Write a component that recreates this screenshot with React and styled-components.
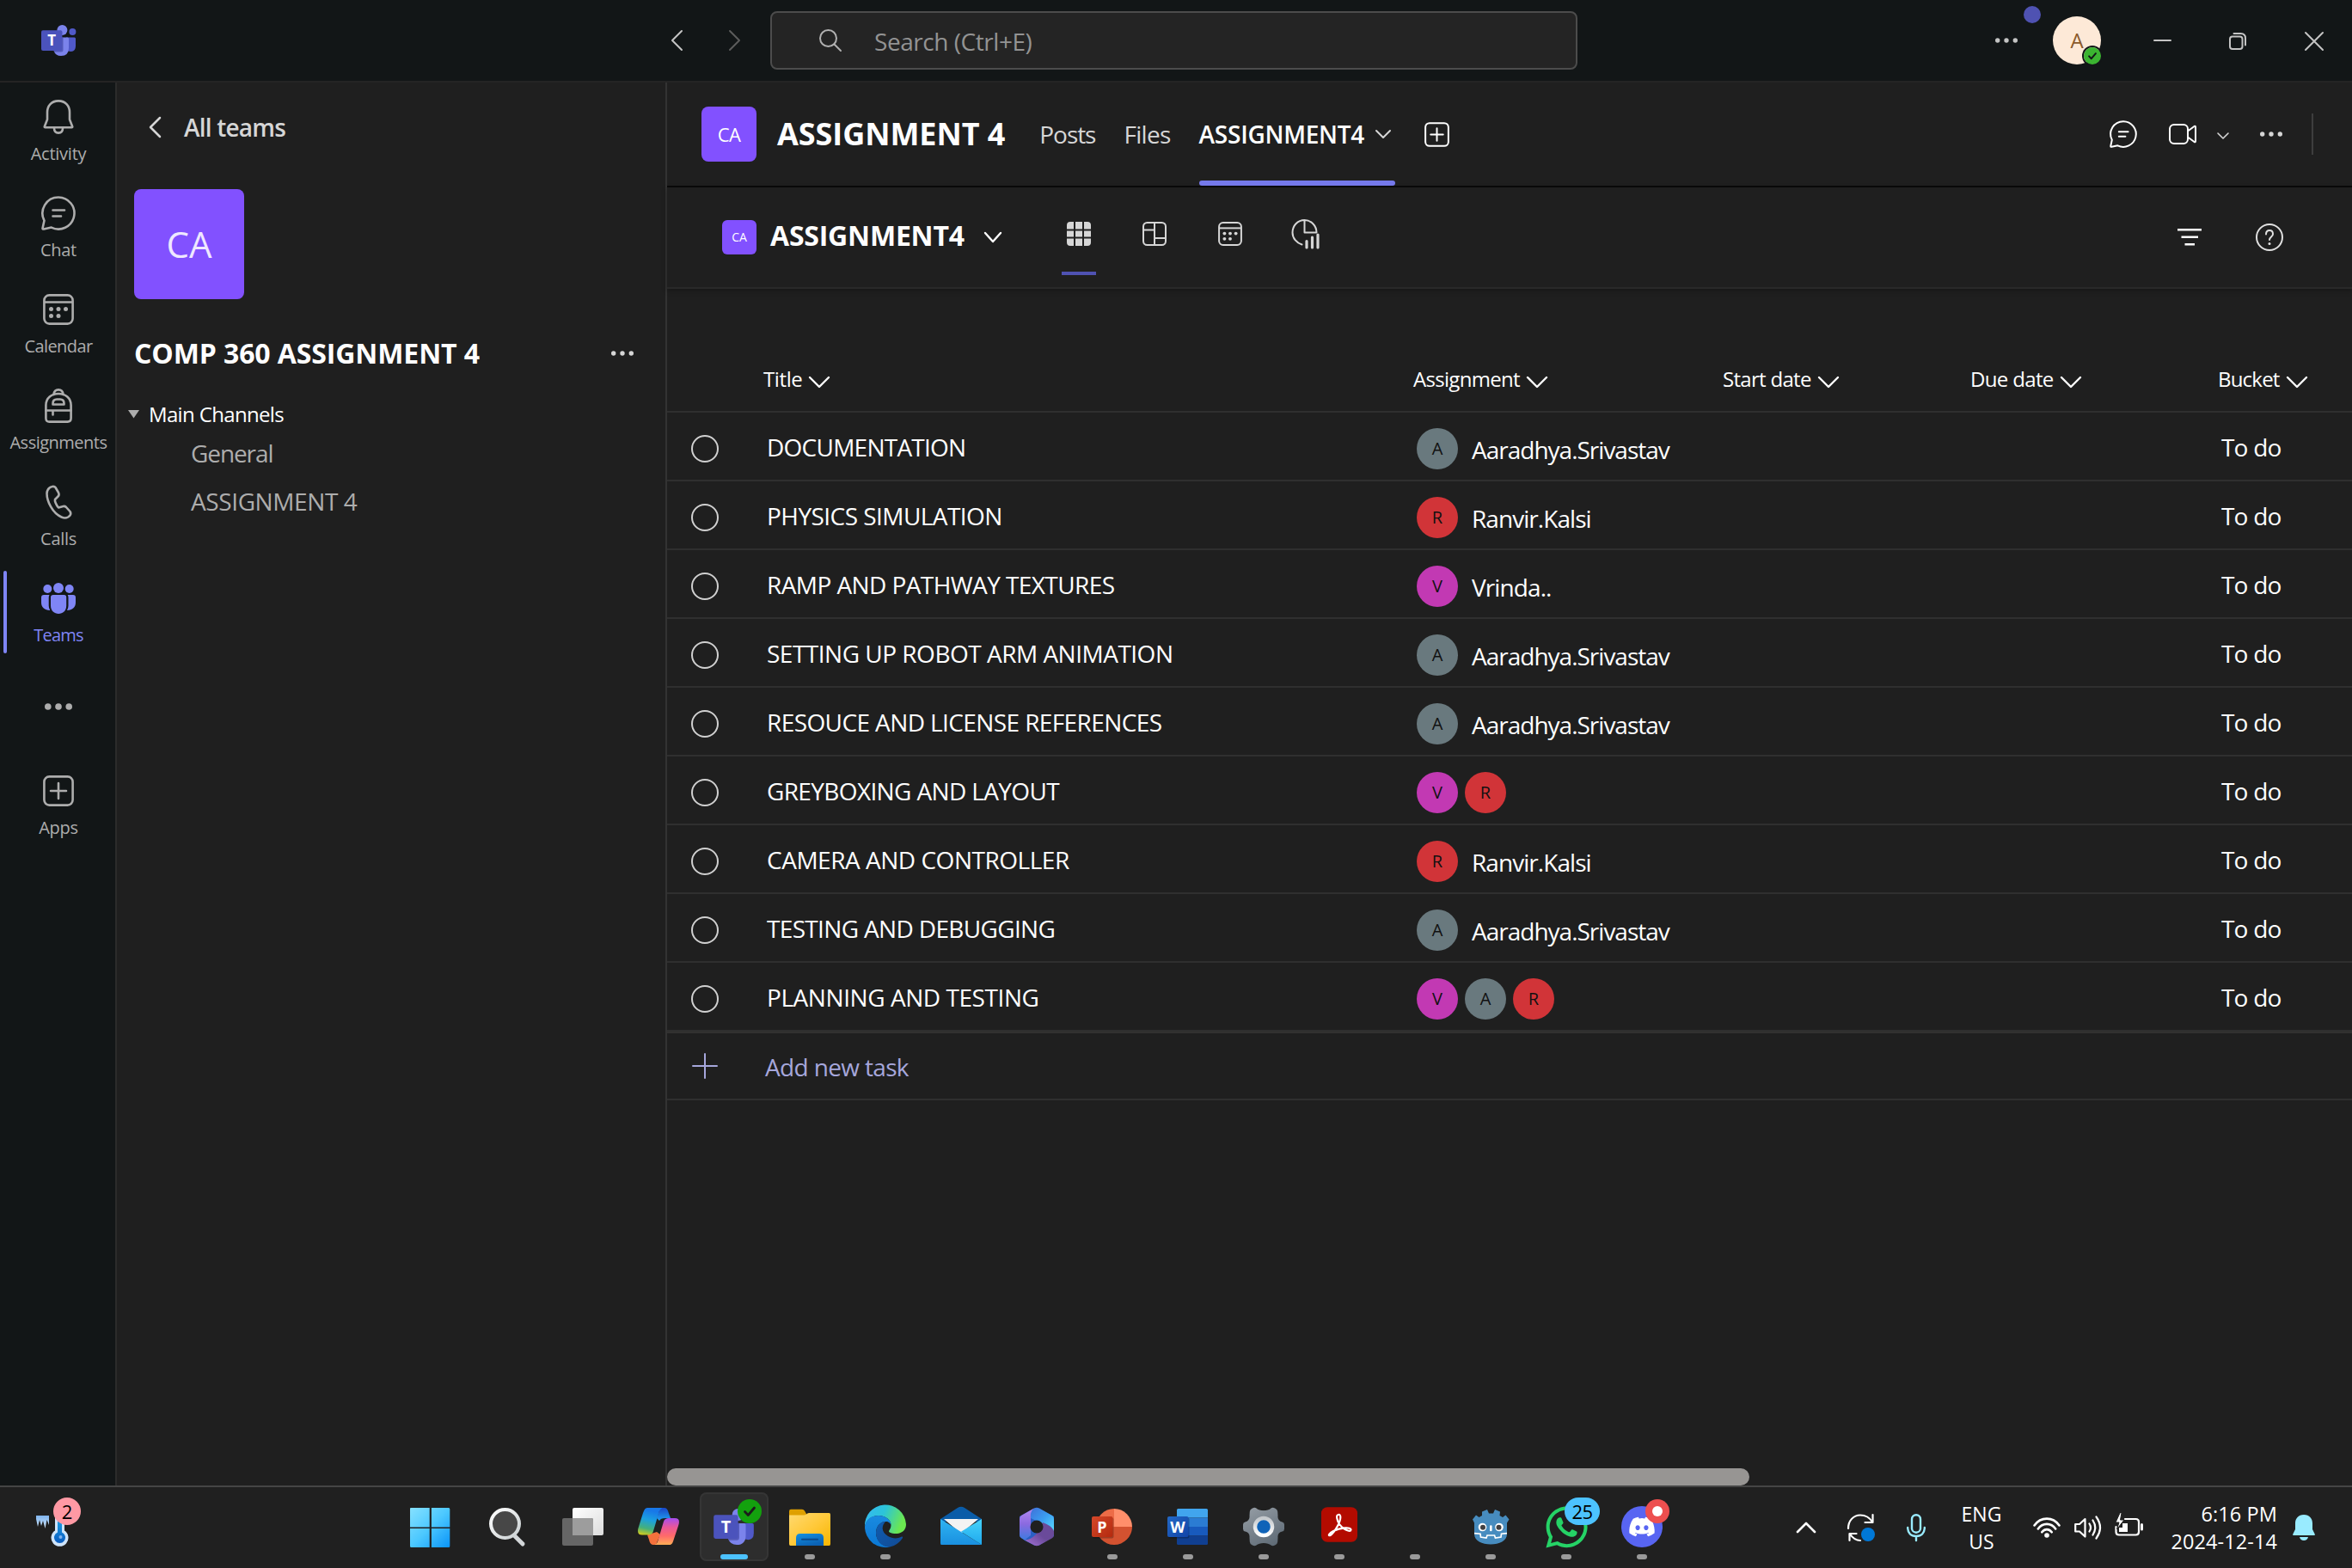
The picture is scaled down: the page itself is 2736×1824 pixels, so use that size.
import React from "react";
import styled, { createGlobalStyle, css } from "styled-components";
import { FaWhatsapp, FaDiscord } from "react-icons/fa";

const GlobalStyle = createGlobalStyle`
  * { box-sizing: border-box; }
  html, body { margin: 0; padding: 0; background: #1f1f1f; overflow: hidden; }
  body { font-family: "Open Sans", "Noto Sans", sans-serif; color: #fff; }
  svg { display: block; flex: none; overflow: visible; }
`;

const Text = styled.span`
  display: block;
  flex: none;
  white-space: pre;
  font-size: ${(p) => p.$size || 28}px;
  line-height: ${(p) => p.$lh || 36}px;
  font-weight: ${(p) => p.$weight || 400};
  letter-spacing: ${(p) => p.$ls || 0}px;
  color: ${(p) => p.$color || "#fff"};
`;

/* ---------- shell ---------- */

const Screen = styled.div`
  display: flex;
  flex-direction: column;
  width: 2736px;
  height: 1824px;
  background: #1f1f1f;
`;

const TitleBar = styled.header`
  display: flex;
  align-items: center;
  height: 96px;
  padding-left: 48px;
  background: #121617;
  border-bottom: 2px solid #242424;
`;

const Slot = styled.div`
  display: flex;
  align-items: center;
  position: relative;
  flex: none;
  margin-left: ${(p) => p.$ml || 0}px;
  margin-top: ${(p) => p.$mt || 0}px;
`;

const SearchBox = styled.div`
  display: flex;
  align-items: center;
  flex: none;
  width: 939px;
  height: 68px;
  margin-left: 35px;
  padding-left: 55px;
  gap: 38px;
  background: #242424;
  border: 2px solid #4c4c4c;
  border-radius: 8px;
`;

const UpdateDot = styled.i`
  position: absolute;
  left: 33px;
  top: -36px;
  width: 20px;
  height: 20px;
  border-radius: 50%;
  background: #4f52b2;
`;

const Account = styled.div`
  position: relative;
  display: flex;
  align-items: center;
  justify-content: center;
  flex: none;
  width: 56px;
  height: 56px;
  margin-left: 41px;
  border-radius: 50%;
  background: #fde9d7;
`;

const Presence = styled.div`
  position: absolute;
  right: 0;
  bottom: 0;
  border-radius: 50%;
  box-shadow: 0 0 0 2px #121617;
`;

const Body = styled.div`
  display: flex;
  flex: 1;
  min-height: 0;
`;

/* ---------- app rail ---------- */

const Rail = styled.nav`
  display: flex;
  flex-direction: column;
  flex: none;
  width: 136px;
  padding-top: 8px;
  background: #121617;
  border-right: 2px solid #2b2b2b;
`;

const RailItem = styled.div`
  position: relative;
  display: flex;
  flex-direction: column;
  align-items: center;
  gap: 6px;
  height: 112px;
  padding-top: ${(p) => p.$pad || 12}px;
  padding-left: 2px;
  color: ${(p) => (p.$active ? "#7f85f5" : "#adadad")};
  ${(p) =>
    p.$active &&
    css`
      &::before {
        content: "";
        position: absolute;
        left: 4px;
        top: 0;
        width: 4px;
        height: 96px;
        border-radius: 2px;
        background: #7f85f5;
      }
    `}
`;

const RailIcon = styled.div`
  display: flex;
  align-items: center;
  justify-content: center;
  height: 40px;
`;

/* ---------- team panel ---------- */

const TeamPanel = styled.aside`
  display: flex;
  flex-direction: column;
  flex: none;
  width: 640px;
  border-right: 2px solid #333;
`;

const PanelBack = styled.div`
  display: flex;
  align-items: center;
  gap: 27px;
  height: 104px;
  padding-left: 38px;
`;

const TeamTile = styled.div`
  display: flex;
  align-items: center;
  justify-content: center;
  flex: none;
  width: ${(p) => p.$s}px;
  height: ${(p) => p.$s}px;
  margin: ${(p) => p.$m || "0"};
  border-radius: ${(p) => p.$r || 8}px;
  background: #8251ff;
`;

const TeamName = styled.div`
  display: flex;
  align-items: center;
  justify-content: space-between;
  margin: 43px 37px 0 20px;
  height: 40px;
`;

const ChannelGroup = styled.div`
  display: flex;
  align-items: center;
  gap: 11px;
  margin-top: 34px;
  padding-left: 13px;
  height: 34px;
`;

const Channel = styled.div`
  display: flex;
  align-items: center;
  height: 56px;
  padding-left: 86px;
`;

/* ---------- main ---------- */

const Main = styled.main`
  display: flex;
  flex-direction: column;
  flex: 1;
  min-width: 0;
`;

const ChannelBar = styled.div`
  display: flex;
  align-items: center;
  height: 122px;
  padding-left: 40px;
  border-bottom: 2px solid #0a0a0a;
`;

const ActiveTab = styled.div`
  display: flex;
  align-items: center;
  gap: 13px;
  position: relative;
  flex: none;
  width: 228px;
  height: 120px;
  margin-left: 33px;
  &::after {
    content: "";
    position: absolute;
    left: 0;
    right: 0;
    bottom: 0;
    height: 6px;
    border-radius: 3px;
    background: #7579eb;
  }
`;

const Actions = styled.div`
  display: flex;
  align-items: center;
  margin-left: auto;
  padding-right: ${(p) => p.$pr}px;
`;

const Rule = styled.div`
  width: 2px;
  height: 48px;
  margin-left: 34px;
  background: #3d3d3d;
`;

const PlanBar = styled.div`
  display: flex;
  align-items: center;
  flex: none;
  height: 118px;
  padding-left: 64px;
  border-bottom: 2px solid #292929;
  box-shadow: 0 2px 6px rgba(0, 0, 0, 0.3);
`;

const ViewTab = styled.div`
  display: flex;
  align-items: center;
  justify-content: center;
  position: relative;
  flex: none;
  width: 40px;
  height: 96px;
  margin: 0 0 8px ${(p) => p.$ml || 48}px;
  color: #d6d6d6;
  ${(p) =>
    p.$active &&
    css`
      &::after {
        content: "";
        position: absolute;
        left: 0;
        bottom: 0;
        width: 40px;
        height: 4px;
        background: #4f52b2;
      }
    `}
`;

const columns = css`
  display: grid;
  grid-template-columns: 112px 756px 360px 288px 288px 156px;
`;

const HeadRow = styled.div`
  ${columns}
  align-items: end;
  flex: none;
  height: 144px;
  padding-bottom: 19px;
  border-bottom: 2px solid #2f2f2f;
`;

const HeadCell = styled.div`
  display: flex;
  align-items: center;
  gap: 8px;
  grid-column-start: ${(p) => p.$col};
`;

const Row = styled.div`
  ${columns}
  align-items: center;
  flex: none;
  height: 80px;
  border-bottom: 2px solid #2f2f2f;
`;

const AddRow = styled(Row)`
  border-top: 2px solid #323130;
`;

const Cell = styled.div`
  display: flex;
  align-items: center;
  gap: 8px;
  min-width: 0;
  padding-left: ${(p) => p.$pl || 0}px;
  padding-top: ${(p) => p.$pt || 0}px;
  grid-column-start: ${(p) => p.$col};
`;

const Check = styled.i`
  width: 32px;
  height: 32px;
  border: 2px solid #d0d0d0;
  border-radius: 50%;
`;

const Persona = styled.div`
  display: flex;
  align-items: center;
  justify-content: center;
  flex: none;
  width: 48px;
  height: 48px;
  border-radius: 50%;
  background: ${(p) => p.$bg};
`;

const Assignee = styled.div`
  margin-left: 8px;
  padding-top: 2px;
`;

const ScrollTrack = styled.div`
  margin-top: auto;
  height: 20px;
`;

const ScrollThumb = styled.div`
  width: 1259px;
  height: 20px;
  border-radius: 10px;
  background: #979593;
`;

/* ---------- taskbar ---------- */

const Taskbar = styled.footer`
  display: flex;
  flex: none;
  height: 96px;
  background: #202020;
  border-top: 2px solid #454545;
`;

const Widgets = styled.div`
  position: relative;
  flex: none;
  width: 458px;
  padding: 25px 0 0 42px;
`;

const AppSlot = styled.div`
  position: relative;
  flex: none;
  width: 80px;
  height: 80px;
  margin: 6px 4px 0;
  padding: 16px;
  border-radius: 8px;
  ${(p) =>
    p.$active &&
    css`
      background: #2d2d2d;
      box-shadow: inset 0 0 0 2px #353535;
    `}
  &::after {
    content: "";
    display: ${(p) => (p.$run || p.$active ? "block" : "none")};
    position: absolute;
    bottom: 2px;
    left: ${(p) => (p.$active ? 24 : 34)}px;
    width: ${(p) => (p.$active ? 32 : 12)}px;
    height: 6px;
    border-radius: 3px;
    background: ${(p) => (p.$active ? "#4cc2ff" : "#9a9a9a")};
  }
`;

const Badge = styled.div`
  position: absolute;
  display: flex;
  align-items: center;
  justify-content: center;
  left: ${(p) => p.$x}px;
  top: ${(p) => p.$y}px;
  width: ${(p) => p.$w}px;
  height: ${(p) => p.$h}px;
  border-radius: 16px;
  background: ${(p) => p.$bg};
`;

const Glyph = styled.div`
  display: flex;
  align-items: center;
  justify-content: center;
  width: 48px;
  height: 48px;
  border-radius: 50%;
  background: ${(p) => p.$bg || "transparent"};
`;

const Tray = styled.div`
  display: flex;
  align-items: center;
  flex: 1;
`;

const TrayText = styled.div`
  display: flex;
  flex-direction: column;
  flex: none;
  align-items: ${(p) => p.$align};
  width: ${(p) => p.$w}px;
  margin-left: ${(p) => p.$ml}px;
`;

/* ---------- icons ---------- */

const Svg = ({ w, h, sw = 2, children, ...rest }) => (
  <svg width={w} height={h} viewBox={`0 0 ${w} ${h}`} fill="none" stroke="currentColor" strokeWidth={sw} strokeLinecap="round" strokeLinejoin="round" {...rest}>
    {children}
  </svg>
);

const Chevron = ({ w, h, d, sw = 2, color = "#fff" }) => {
  const pts = {
    down: `1,1 ${w / 2},${h - 1} ${w - 1},1`,
    up: `1,${h - 1} ${w / 2},1 ${w - 1},${h - 1}`,
    left: `${w - 1},1 1,${h / 2} ${w - 1},${h - 1}`,
    right: `1,1 ${w - 1},${h / 2} 1,${h - 1}`,
  };
  return <Svg w={w} h={h} sw={sw} color={color}><polyline points={pts[d]} /></Svg>;
};

const Dots = ({ w = 26, r = 2.7, color = "#d6d6d6" }) => (
  <Svg w={w} h={8} color={color}>
    <g fill="currentColor" stroke="none">
      <circle cx={r} cy="4" r={r} />
      <circle cx={w / 2} cy="4" r={r} />
      <circle cx={w - r} cy="4" r={r} />
    </g>
  </Svg>
);

const TeamsLogo = ({ w, h }) => (
  <svg width={w} height={h} viewBox="0 0 40 36">
    <circle cx="36.4" cy="8" r="4" fill="#5059c9" />
    <path d="M29 14.5H38.6Q40 14.5 40 16V24.5Q40 31 34.5 31Q31 31 29 29Z" fill="#5059c9" />
    <circle cx="24.4" cy="6" r="6" fill="#7b83eb" />
    <path d="M14 14.5H30.5Q32 14.5 32 16V26.5Q32 36 23 36Q16.5 36 14.5 30Z" fill="#7b83eb" />
    <path d="M14 14.5H25.5V29Q25.5 31.5 23 31.5H15Z" fill="#3c4299" opacity=".6" />
    <rect x="0" y="6.3" width="24.4" height="23.6" rx="2" fill="#4b53bc" />
    <text x="12.2" y="24.2" textAnchor="middle" fontSize="17" fontWeight="700" fill="#fff">T</text>
  </svg>
);

const Bell = () => (
  <Svg w={36} h={40} sw={2.6}>
    <path d="M18 1.4C9.5 1.4 5 7.5 5 14.5V23L1.8 31.2Q1.5 32.2 2.6 32.2H33.4Q34.5 32.2 34.2 31.2L31 23V14.5C31 7.5 26.5 1.4 18 1.4Z" />
    <path d="M13 33C13 36.5 15 38.6 18 38.6S23 36.5 23 33" />
  </Svg>
);

const ChatIcon = ({ s = 40, sw = 2.6 }) => (
  <svg width={s} height={s} viewBox="0 0 40 40" fill="none" stroke="currentColor" strokeWidth={(sw * 40) / s} strokeLinecap="round" strokeLinejoin="round">
    <path d="M20 1.5A18.5 18.5 0 1 1 11.8 36.6L3 38.5Q1.300 38.8 1.6 37.2L3.500 28.500A18.5 18.5 0 0 1 20 1.5Z" />
    <path d="M13.5 16.5H27M13.5 23.5H23" />
  </svg>
);

const CalendarIcon = ({ s = 36, sw = 2.6 }) => (
  <svg width={s} height={s} viewBox="0 0 36 36" fill="none" stroke="currentColor" strokeWidth={(sw * 36) / s}>
    <rect x="1.4" y="1.4" width="33.2" height="33.2" rx="6" />
    <path d="M1.4 9.5H34.6" />
    <g fill="currentColor" stroke="none">
      <circle cx="9.5" cy="17.5" r="2.5" /><circle cx="18" cy="17.5" r="2.5" /><circle cx="26.5" cy="17.5" r="2.5" />
      <circle cx="9.5" cy="25.5" r="2.5" /><circle cx="18" cy="25.5" r="2.5" />
    </g>
  </svg>
);

const Backpack = () => (
  <Svg w={32} h={40} sw={2.6}>
    <path d="M1.4 19.5C1.4 11 8 6 16 6S30.6 11 30.6 19.5V34.6Q30.6 38.6 26.6 38.6H5.4Q1.4 38.6 1.4 34.6Z" />
    <path d="M10.5 7Q11 1.4 16 1.4T21.5 7" />
    <path d="M1.4 25.5H30.6M9.5 25.5V30.5" />
    <path d="M9.5 17.5Q9.5 12.5 14 12.5H18Q22.5 12.5 22.5 17.5V18.5H9.5Z" />
  </Svg>
);

const Phone = () => (
  <Svg w={31} h={40} sw={2.6}>
    <path d="M4.5 3.5C6 2 10 1 11.5 3L15 9C16 11 15.5 12.5 14.5 13.5L11 17C10.5 18.5 12 23 15 26.5L20.5 25C22 24.7 23 25 24 26L28.5 31C29.6 32.7 29.5 34 28.5 35.5C26 38.5 22.5 39.3 18.5 37.5C8 33 1.5 19 1.5 10C1.5 7 2.8 5 4.5 3.5Z" />
  </Svg>
);

const People = () => (
  <Svg w={40} h={36}>
    <g fill="currentColor" stroke="none">
      <circle cx="20" cy="6" r="6" /><circle cx="7.3" cy="7" r="5" /><circle cx="32.7" cy="7" r="5" />
      <path d="M14 14H26.5Q29.2 14 29.2 16.8V26.5C29.2 32.5 25 36 20.1 36S11 32.5 11 26.5V16.8Q11 14 14 14Z" />
      <path d="M3 14H9.5Q8.7 15.3 8.7 17V26.5Q8.7 29.5 10.2 32C4.5 32.2 0 28.5 0 23V17Q0 14 3 14Z" />
      <path d="M37 14H30.7Q31.5 15.3 31.5 17V26.5Q31.5 29.5 30 32C35.6 32.2 40 28.5 40 23V17Q40 14 37 14Z" />
    </g>
  </Svg>
);

const PlusBox = ({ s = 36, sw = 2.6 }) => (
  <svg width={s} height={s} viewBox="0 0 36 36" fill="none" stroke="currentColor" strokeWidth={(sw * 36) / s} strokeLinecap="round">
    <rect x="1.4" y="1.4" width="33.2" height="33.2" rx="6" />
    <path d="M18 9V27M9 18H27" />
  </svg>
);

const CheckBadge = ({ s, bg, fg }) => (
  <svg width={s} height={s} viewBox="0 0 28 28">
    <circle cx="14" cy="14" r="14" fill={bg} />
    <path d="M8.5 14.5L12.3 18.5L19.5 10" fill="none" stroke={fg} strokeWidth="2.8" strokeLinecap="round" strokeLinejoin="round" />
  </svg>
);

const Box = ({ children }) => <svg width="48" height="48" viewBox="0 0 48 48">{children}</svg>;

const Grad = ({ id, c, x2 = 0, y2 = 1 }) => (
  <linearGradient id={id} x1="0" y1="0" x2={x2} y2={y2}>
    {c.map((v, i) => <stop key={i} offset={i / (c.length - 1)} stopColor={v} />)}
  </linearGradient>
);

const WindowsIcon = () => (
  <Box>
    <defs><Grad id="win" c={["#86e1ff", "#4cc8ff", "#0a94f8"]} x2={1} /></defs>
    <path fill="url(#win)" d="M0 2H21.7V24.500H-1V3Q-1 2 0 2ZM23.9 2H44Q45.3 2 45.3 3.5V24.500H23.9ZM-1 26H21.7V48H0.5Q-1 48 -1 46.5ZM23.9 26H45.3V46.5Q45.3 48 44 48H23.9Z" />
  </Box>
);

const SearchIcon = () => (
  <Box>
    <defs><Grad id="sea" c={["#fff", "#c9cfd1"]} x2={1} /></defs>
    <path d="M33 35L42 44" stroke="#d3d7d9" strokeWidth="5" strokeLinecap="round" />
    <circle cx="21.5" cy="20.5" r="16.5" fill="#474747" stroke="url(#sea)" strokeWidth="4" />
  </Box>
);

const TaskViewIcon = () => (
  <Box>
    <defs><Grad id="tv" c={["#fff", "#dcdcdc"]} x2={1} /></defs>
    <rect x="12" y="2" width="36" height="32" rx="2" fill="url(#tv)" />
    <rect x="0" y="14" width="36" height="32" rx="2" fill="#666" />
    <path d="M12 14H34Q36 14 36 16V34H12Z" fill="#9d9d9d" />
  </Box>
);

const CopilotIcon = () => (
  <Box>
    <defs>
      <Grad id="cpa" c={["#1878e8", "#1b9fe0", "#45b07a", "#ffd400"]} x2={-0.2} />
      <Grad id="cpb" c={["#a64df0", "#e8579a", "#ff6a6a", "#ffae55"]} />
      <Grad id="cpc" c={["#1a46c8", "#1fa0f0"]} />
    </defs>
    <path d="M26 2H31C34 2 35 5 36 8.500L38 14H32C28 14 26 15 25 17L22 14Z" fill="url(#cpc)" />
    <path d="M11 33.500L22 30L26 33L21 45H19C15 45 14 43 13 39Z" fill="#f4713c" />
    <path d="M11 2H28.5C26 3 25 5 24 9L18 29C17 32.500 15 33.500 11 33.500H5C0 33.500 -1 30 1 24L6 8C7.500 4 8.500 2 11 2Z" fill="url(#cpa)" />
    <path d="M37 45H19.5C22 44 23 42 24 38L30 18C31 15 33 14 36 14H43C48 14 49 17 47 23L42 38C40.500 43 39.500 45 37 45Z" fill="url(#cpb)" />
  </Box>
);

const FolderIcon = () => (
  <Box>
    <defs><Grad id="fo" c={["#ffd970", "#ffc93a", "#f7b500"]} x2={1} /><Grad id="fb" c={["#1491e0", "#0b62b5"]} x2={0.5} /></defs>
    <path d="M0 6Q0 3.7 2 3.7H15Q17 3.7 18 5.500L20 9V14H0Z" fill="#dfa000" />
    <path d="M0 10.500H17Q19 10.500 20 9.500Q21 8 23 8H46.500Q48 8 48 10V44Q48 46 46.500 46H1.500Q0 46 0 44Z" fill="url(#fo)" />
    <path d="M8 46V37Q8 32 13 32H35Q40 32 40 37V46Z" fill="url(#fb)" />
    <path d="M15 38.7H33" stroke="#0a4a8c" strokeWidth="2" strokeLinecap="round" />
  </Box>
);

const EdgeIcon = () => (
  <Box>
    <defs>
      <Grad id="eg" c={["#35b8f5", "#2cc4d8", "#6be850"]} x2={1} y2={0.3} />
      <Grad id="eb" c={["#1a8ae0", "#0a78d4"]} />
      <Grad id="ed" c={["#0f5cb0", "#114a94"]} x2={1} />
    </defs>
    <path d="M0 24A24 24 0 0 1 48 21C48 29 42 32 36 32C31 32 28 30.5 28 29.3C28 28 30.5 26.5 30.5 22C30.5 16 24 11 16 11C7 11 1 17 0 24Z" fill="url(#eg)" />
    <path d="M0 24C1 16 7 11 16 11C24 11 30.5 16 30.5 22C29 18.5 26.5 18 24 18C18 18 13 24 13 31C13 40 20 47 29 47.500A24 24 0 0 1 0 24Z" fill="url(#eb)" />
    <path d="M24 18C18 18 13 24 13 31C13 41 21 48 29 47.500C36 46 41 42 44 37C44.5 35.5 43.5 35.3 42 36C38 38 32 38 27 35C20 31 18.5 24 24 18Z" fill="url(#ed)" />
  </Box>
);

const MailIcon = () => (
  <Box>
    <defs><Grad id="ml" c={["#2fb4f2", "#1a90e0"]} /><Grad id="mr" c={["#46d3fa", "#1fa8ee"]} /></defs>
    <path d="M0 15L20 2Q24 -0.5 28 2L48 15V18H0Z" fill="#0a5ca8" />
    <path d="M4 15H44L24 32Z" fill="#f3f3f3" />
    <path d="M0 15L48 45H1Q0 45 0 43Z" fill="url(#ml)" />
    <path d="M48 15L24 29.7L48 45Z" fill="url(#mr)" />
  </Box>
);

const M365Icon = () => (
  <Box>
    <defs>
      <Grad id="ma" c={["#b58af0", "#8a6ae0", "#3d7be0"]} />
      <Grad id="mb" c={["#3f6fd8", "#3b9df0", "#5adcff"]} x2={1} />
      <Grad id="mc" c={["#6a4a9a", "#a874d8", "#cf9cf8"]} x2={-1} />
    </defs>
    <path d="M24 2L44 12V35L26 46H22L10 40L4 35V12L20 3Z" fill="#2a5fc4" />
    <path d="M21 2.500L6 11Q4 12.500 4 15V33Q4 36 6.500 37.500L10 39.500L17 34V14Q17 6 21 2.500Z" fill="url(#ma)" />
    <path d="M21 2.500Q24 1 27 2.500L42 11Q44 12.500 44 15V30Q40 26 30 20L17 14Q16 6 21 2.500Z" fill="url(#mb)" />
    <path d="M44 27V33Q44 36 41.500 37.500L27 45.500Q24 47 21 45.500L10 39.500Q17 39 23 33L31 19Q42 23 44 29Z" fill="url(#mc)" />
    <circle cx="24" cy="24" r="7.5" fill="#202020" />
  </Box>
);

const OfficeTile = ({ id, a, b, letter }) => (
  <>
    <defs><Grad id={id} c={[a, b]} x2={1} /></defs>
    <rect x="1" y="13.5" width="24.5" height="24" rx="2" fill="#000" opacity=".25" />
    <rect x="0" y="12" width="24.5" height="24" rx="2" fill={`url(#${id})`} />
    <text x="12" y="30.5" textAnchor="middle" fontSize="18" fontWeight="700" fill="#fff">{letter}</text>
  </>
);

const PowerPointIcon = () => (
  <Box>
    <path d="M26 3A21 21 0 0 0 5 24H26Z" fill="#ed6c47" />
    <path d="M26 3A21 21 0 0 1 47 24H26Z" fill="#ff8f6b" />
    <path d="M5 24A21 21 0 0 0 47 24Z" fill="#d35230" />
    <OfficeTile id="pp" a="#d5482a" b="#b32a0e" letter="P" />
  </Box>
);

const WordIcon = () => (
  <Box>
    <path d="M11 13.500V4.500Q11 3 12.500 3H45.500Q47 3 47 4.500V13.500Z" fill="#41a5ee" />
    <path d="M11 13.500H47V24H11Z" fill="#2b7cd3" />
    <path d="M11 24H47V34.500H11Z" fill="#185abd" />
    <path d="M11 34.500H47V43.500Q47 45 45.500 45H12.500Q11 45 11 43.500Z" fill="#103f91" />
    <OfficeTile id="wd" a="#2368c4" b="#1144a8" letter="W" />
  </Box>
);

const SettingsIcon = () => (
  <Box>
    <defs>
      <linearGradient id="gr" gradientUnits="userSpaceOnUse" x1="10" y1="2" x2="36" y2="46">
        <stop offset="0" stopColor="#929aa2" /><stop offset="1" stopColor="#5f6b76" />
      </linearGradient>
      <Grad id="gw" c={["#c4c8cc", "#fff"]} />
    </defs>
    <g fill="none" stroke="url(#gr)">
      <circle cx="24" cy="24" r="14" strokeWidth="9" />
    </g>
    <path
      fill="url(#gr)"
      d="M0 21.500Q0 19 2.500 18.500C6 17.800 8 15 7.500 11.500L7.800 6.500Q8 4 10.500 2.800Q13.500 1 15.500 2.500C19 6 29 6 32.500 2.500Q34.500 1 37.500 2.800Q40 4 40.200 6.500L40.500 11.500C40 15 42 17.800 45.500 18.500Q48 19 48 21.500V26.500Q48 29 45.500 29.500C42 30.200 40 33 40.500 36.500L40.200 41.500Q40 44 37.500 45.200Q34.500 47 32.500 45.500C29 42 19 42 15.500 45.500Q13.500 47 10.500 45.200Q8 44 7.800 41.500L7.500 36.500C8 33 6 30.200 2.500 29.500Q0 29 0 26.500Z"
    />
    <circle cx="24" cy="24" r="10" fill="#0f63b8" stroke="url(#gw)" strokeWidth="4.5" />
  </Box>
);

const AcrobatIcon = () => (
  <Box>
    <rect x="3" y="1.3" width="42" height="40.5" rx="7" fill="#b30b00" />
    <path transform="translate(3 1)" d="M20 9C16.5 9 18.5 16 21 20C25 26 34 30 34.5 26.5C35 23 22 24 14 28C8 31 8 34 10.5 33C15 30 24 16 22 10C21.7 9 20.6 8.8 20 9Z" fill="none" stroke="#fff" strokeWidth="2.2" />
  </Box>
);

const GodotIcon = () => (
  <Box>
    <g transform="translate(3 3.5)">
      <path d="M11 3L17 0.5L19 5H24L26 0.5L32 3L31.5 7.500L35 9.500L38.500 7L42.500 12L40 16V29C40 37 31 41 21 41C11 41 2 37 2 29V16L0 12L4 7L7.500 9.500L11 7.500Z" fill="#478cbf" />
      <circle cx="11.5" cy="21" r="4.8" fill="#fff" /><circle cx="31" cy="21" r="4.8" fill="#fff" />
      <circle cx="12" cy="21.3" r="3" fill="#414042" /><circle cx="30.5" cy="21.3" r="3" fill="#414042" />
      <path d="M21.3 20V24.5" stroke="#fff" strokeWidth="2.6" strokeLinecap="round" />
      <path d="M2 28.200L9 28.700L9.500 32.500L16 33.500L17 30.500H25.500L26.500 33.500L33 32.500L33.500 28.700L40 28.200" fill="none" stroke="#fff" strokeWidth="1.7" />
    </g>
  </Box>
);

const WeatherIcon = () => (
  <Svg w={40} h={44} stroke="none">
    <defs><Grad id="ic" c={["#7fb4ee", "#d4e9fc"]} /><Grad id="th" c={["#1fb0ee", "#0a5cc0"]} /></defs>
    <path d="M0 8H15V19L12.500 13L10.500 23L8 14L6 20L4 13L2 21L0 12Z" fill="url(#ic)" />
    <path d="M22 4Q22 0 27.500 0T33 4V25.500A10 10 0 1 1 22 25.500Z" fill="#cfe4fa" />
    <path d="M25 6H30V27.500A6.500 6.500 0 1 1 25 27.500Z" fill="url(#th)" />
    <circle cx="28.5" cy="33" r="2" fill="#7fb2ee" />
  </Svg>
);

/* ---------- data ---------- */

const RAIL = [
  { label: "Activity", icon: <Bell />, ls: -0.25 },
  { label: "Chat", icon: <ChatIcon />, ls: -0.3 },
  { label: "Calendar", icon: <CalendarIcon />, ls: -0.6 },
  { label: "Assignments", icon: <Backpack />, ls: -0.5 },
  { label: "Calls", icon: <Phone />, ls: -0.3 },
  { label: "Teams", icon: <People />, active: true, ls: -0.8 },
  { icon: <Dots w={32} r={3.8} color="#adadad" />, pad: 26 },
  { label: "Apps", icon: <PlusBox />, ls: -0.3 },
];

const PEOPLE = {
  A: { name: "Aaradhya.Srivastav", bg: "#69797e", ls: -1 },
  R: { name: "Ranvir.Kalsi", bg: "#d13438", ls: -0.95 },
  V: { name: "Vrinda..", bg: "#c239b3", ls: -0.9 },
};

const TASKS = [
  ["DOCUMENTATION", "A", -0.75],
  ["PHYSICS SIMULATION", "R", -0.55],
  ["RAMP AND PATHWAY TEXTURES", "V", -0.58],
  ["SETTING UP ROBOT ARM ANIMATION", "A", -0.5],
  ["RESOUCE AND LICENSE REFERENCES", "A", -0.6],
  ["GREYBOXING AND LAYOUT", "VR", -0.64],
  ["CAMERA AND CONTROLLER", "R", -0.48],
  ["TESTING AND DEBUGGING", "A", -0.66],
  ["PLANNING AND TESTING", "VAR", -0.44],
];

const HEAD = [
  ["Title", 2, -0.4],
  ["Assignment", 3, -0.7],
  ["Start date", 4, -0.7],
  ["Due date", 5, -0.65],
  ["Bucket", 6, -0.8],
];

export default function App() {
  return (
    <Screen>
      <GlobalStyle />
      <TitleBar>
        <TeamsLogo w={40} h={36} />
        <Slot $ml={693}><Chevron w={13} h={24} d="left" color="#c4c4c4" /></Slot>
        <Slot $ml={54}><Chevron w={13} h={24} d="right" color="#5c5c5c" /></Slot>
        <SearchBox>
          <Svg w={26} h={26} color="#b0b0b0"><circle cx="10.5" cy="10.5" r="9.5" /><path d="M17.5 17.5L25 25" /></Svg>
          <Slot $mt={2}><Text $color="#939393" $ls={-0.45}>Search (Ctrl+E)</Text></Slot>
        </SearchBox>
        <Slot $ml={486}><Dots color="#c4c4c4" /><UpdateDot /></Slot>
        <Account>
          <Text $size={24} $lh={32} $color="#8b5a2b">A</Text>
          <Presence><CheckBadge s={20} bg="#3bb431" fg="#121617" /></Presence>
        </Account>
        <Slot $ml={61}><Svg w={21} h={2} color="#c4c4c4"><path d="M1 1H20" /></Svg></Slot>
        <Slot $ml={67} $mt={1}>
          <Svg w={20} h={20} color="#c4c4c4"><rect x="1" y="4.5" width="14.5" height="14.5" rx="3" /><path d="M5.5 1H13.5Q19 1 19 6.5V14.5" /></Svg>
        </Slot>
        <Slot $ml={68} $mt={1}><Svg w={22} h={22} color="#c4c4c4"><path d="M1 1L21 21M21 1L1 21" /></Svg></Slot>
      </TitleBar>

      <Body>
        <Rail>
          {RAIL.map((r, i) => (
            <RailItem key={i} $active={r.active} $pad={r.pad}>
              <RailIcon>{r.icon}</RailIcon>
              {r.label && <Text $size={20} $lh={34} $color="inherit" $ls={r.ls}>{r.label}</Text>}
            </RailItem>
          ))}
        </Rail>

        <TeamPanel>
          <PanelBack>
            <Chevron w={13} h={24} d="left" sw={2.5} color="#d6d6d6" />
            <Text $weight={600} $color="#d6d6d6" $ls={-0.8}>All teams</Text>
          </PanelBack>
          <TeamTile $s={128} $m="20px 0 0 20px"><Text $size={42} $lh={56} $color="#efe8ff">CA</Text></TeamTile>
          <TeamName>
            <Text $size={32} $weight={700} $ls={-0.1}>COMP 360 ASSIGNMENT 4</Text>
            <Dots />
          </TeamName>
          <ChannelGroup>
            <Svg w={13} h={10} color="#adadad"><path d="M0 0H13L6.5 9.5Z" fill="currentColor" stroke="none" /></Svg>
            <Text $size={24} $ls={-0.65}>Main Channels</Text>
          </ChannelGroup>
          <Channel><Text $color="#adadad" $ls={-1.1}>General</Text></Channel>
          <Channel><Text $color="#adadad" $ls={-0.4}>ASSIGNMENT 4</Text></Channel>
        </TeamPanel>

        <Main>
          <ChannelBar>
            <TeamTile $s={64}><Text $size={22} $lh={30} $ls={-0.6}>CA</Text></TeamTile>
            <Slot $ml={24}><Text $size={36} $lh={48} $weight={700} $ls={-0.05}>ASSIGNMENT 4</Text></Slot>
            <Slot $ml={40}><Text $color="#d6d6d6" $ls={-1.05}>Posts</Text></Slot>
            <Slot $ml={33}><Text $color="#d6d6d6" $ls={-0.7}>Files</Text></Slot>
            <ActiveTab>
              <Text $weight={600} $ls={-0.25}>ASSIGNMENT4</Text>
              <Chevron w={18} h={10} d="down" color="#d6d6d6" />
            </ActiveTab>
            <Slot $ml={34}><PlusBox s={29} sw={2} /></Slot>
            <Actions $pr={45}>
              <ChatIcon s={32} sw={2} />
              <Slot $ml={37}>
                <Svg w={32} h={24}><rect x="1" y="1" width="21" height="22" rx="5" /><path d="M22 8.5L29.5 3Q31 2.2 31 4V20Q31 21.8 29.5 21L22 15.5" /></Svg>
              </Slot>
              <Slot $ml={24} $mt={4}><Chevron w={14} h={8} d="down" sw={1.6} color="#d6d6d6" /></Slot>
              <Slot $ml={36}><Dots /></Slot>
              <Rule />
            </Actions>
          </ChannelBar>

          <PlanBar>
            <TeamTile $s={40} $r={6}><Text $size={14} $lh={20}>CA</Text></TeamTile>
            <Slot $ml={16} $mt={-4}><Text $size={32} $lh={44} $weight={700} $ls={-0.2}>ASSIGNMENT4</Text></Slot>
            <Slot $ml={23}><Chevron w={20} h={12} d="down" sw={2.4} /></Slot>
            <ViewTab $active $ml={70}>
              <Svg w={28} h={28}>
                <g fill="currentColor" stroke="none">
                  <path d="M8 0V8.5H0V4Q0 0 4 0ZM10 0H18V8.5H10ZM20 0H24Q28 0 28 4V8.5H20ZM0 10.5H8V17.5H0ZM10 10.5H18V17.5H10ZM20 10.5H28V17.5H20ZM0 19.5H8V28H4Q0 28 0 24ZM10 19.5H18V28H10ZM20 19.5H28V24Q28 28 24 28H20Z" />
                </g>
              </Svg>
            </ViewTab>
            <ViewTab><Svg w={28} h={28}><rect x="1" y="1" width="26" height="26" rx="4.5" /><path d="M14 1V27M1 9.5H14M14 19H27" /></Svg></ViewTab>
            <ViewTab><CalendarIcon s={28} sw={2} /></ViewTab>
            <ViewTab>
              <Svg w={33} h={34}>
                <path d="M15.5 1V15.5H29.5M15.5 1C23 1 29.5 7.5 29.5 15.5M15.5 1C7.5 1 1.5 7.5 1.5 15.5C1.5 22 6 27.5 12.5 29.5" />
                <path d="M18 25.5V33M24.5 21V33M31 18V33" strokeWidth="3.2" />
              </Svg>
            </ViewTab>
            <Actions $pr={80}>
              <Svg w={28} h={20} sw={2.4} strokeLinecap="butt"><path d="M0 1.2H28M4.5 9.7H24M8.5 18.2H20" /></Svg>
              <Slot $ml={63}>
                <Svg w={32} h={32} color="#e0e0e0">
                  <circle cx="16" cy="16" r="15" />
                  <path d="M12 12.5C12 9.5 13.8 8 16 8S20 9.5 20 12.2C20 15.5 16 15.5 16 19" />
                  <circle cx="16" cy="23.5" r="1.5" fill="currentColor" stroke="none" />
                </Svg>
              </Slot>
            </Actions>
          </PlanBar>

          <HeadRow>
            {HEAD.map(([label, col, ls]) => (
              <HeadCell key={label} $col={col}>
                <Text $size={24} $ls={ls}>{label}</Text>
                <Slot $mt={7}><Chevron w={24} h={13} d="down" sw={2.4} /></Slot>
              </HeadCell>
            ))}
          </HeadRow>
          {TASKS.map(([title, who, ls]) => (
            <Row key={title}>
              <Cell $col={1} $pl={28} $pt={6}><Check /></Cell>
              <Cell $col={2} $pl={4} $pt={2}><Text $ls={ls}>{title}</Text></Cell>
              <Cell $col={3} $pl={4} $pt={6}>
                {who.split("").map((k) => (
                  <Persona key={k} $bg={PEOPLE[k].bg}><Text $size={20} $lh={28} $color="#111">{k}</Text></Persona>
                ))}
                {who.length === 1 && <Assignee><Text $ls={PEOPLE[who].ls}>{PEOPLE[who].name}</Text></Assignee>}
              </Cell>
              <Cell $col={6} $pl={4} $pt={2}><Text $ls={-0.8}>To do</Text></Cell>
            </Row>
          ))}
          <AddRow>
            <Cell $col={1} $pl={29}><Svg w={30} h={30} color="#a6a7dc"><path d="M15 1V29M1 15H29" /></Svg></Cell>
            <Cell $col={2} $pl={2} $pt={2}><Text $color="#a6a7dc" $ls={-0.65}>Add new task</Text></Cell>
          </AddRow>
          <ScrollTrack><ScrollThumb /></ScrollTrack>
        </Main>
      </Body>

      <Taskbar>
        <Widgets>
          <WeatherIcon />
          <Badge $x={62} $y={12} $w={32} $h={32} $bg="#ff99a4"><Text $size={22} $lh={30} $color="#000">2</Text></Badge>
        </Widgets>
        <AppSlot><WindowsIcon /></AppSlot>
        <AppSlot><SearchIcon /></AppSlot>
        <AppSlot><TaskViewIcon /></AppSlot>
        <AppSlot><CopilotIcon /></AppSlot>
        <AppSlot $active>
          <Slot $mt={3}><TeamsLogo w={47} h={42} /></Slot>
          <Badge $x={44} $y={8} $w={28} $h={28} $bg="transparent"><CheckBadge s={28} bg="#13a10e" fg="#1c1c1c" /></Badge>
        </AppSlot>
        <AppSlot $run><FolderIcon /></AppSlot>
        <AppSlot $run><EdgeIcon /></AppSlot>
        <AppSlot><MailIcon /></AppSlot>
        <AppSlot><M365Icon /></AppSlot>
        <AppSlot $run><PowerPointIcon /></AppSlot>
        <AppSlot $run><WordIcon /></AppSlot>
        <AppSlot $run><SettingsIcon /></AppSlot>
        <AppSlot $run><AcrobatIcon /></AppSlot>
        <AppSlot $run />
        <AppSlot $run><GodotIcon /></AppSlot>
        <AppSlot $run>
          <Glyph><FaWhatsapp size={55} color="#25d366" /></Glyph>
          <Badge $x={38} $y={6} $w={41} $h={32} $bg="#4cc2ff"><Text $size={22} $lh={30} $color="#000" $ls={-0.6}>25</Text></Badge>
        </AppSlot>
        <AppSlot $run>
          <Glyph $bg="#5865f2"><FaDiscord size={32} color="#fff" /></Glyph>
          <Badge $x={44} $y={8} $w={28} $h={28} $bg="#ed4f4f"><Badge $x={8} $y={8} $w={12} $h={12} $bg="#fff" /></Badge>
        </AppSlot>
        <Tray>
          <Slot $ml={136}><Chevron w={22} h={12} d="up" sw={2.6} /></Slot>
          <Slot $ml={37}>
            <Svg w={32} h={32} sw={2.2}>
              <path d="M1 17C1 8 7 1.5 15 1.5C21 1.5 26 4.5 29 9.5M29.5 1V10H20.5" />
              <path d="M2.5 31V23H10.5M3 23.5C6 28 10 31 15 31" />
              <circle cx="24" cy="24" r="8" fill="#0078d7" stroke="none" />
            </Svg>
          </Slot>
          <Slot $ml={37}>
            <Svg w={22} h={32} sw={2.4} color="#99ebff"><rect x="6" y="1.2" width="10" height="20.5" rx="5" /><path d="M1.2 16C1.2 22.5 5 26 11 26S20.8 22.5 20.8 16M11 26V31" /></Svg>
          </Slot>
          <TrayText $ml={39} $w={52} $align="center">
            <Text $size={23} $lh={32}>ENG</Text>
            <Text $size={23} $lh={32}>US</Text>
          </TrayText>
          <Slot $ml={34}>
            <Svg w={32} h={24} sw={2.6}>
              <path d="M1.5 9.5C9 -1 23 -1 30.5 9.5M5.8 13.5C11 6 21 6 26.2 13.5M10.3 17.3C13.3 13 18.7 13 21.7 17.3" />
              <circle cx="16" cy="21" r="2.8" fill="currentColor" stroke="none" />
            </Svg>
          </Slot>
          <Slot $ml={16}>
            <Svg w={32} h={28} sw={2.2}><path d="M1.2 10V18.5H6L12.5 24.5V4L6 10ZM17.5 9.5Q20.5 14 17.5 18.5M21.5 5.5Q27 14 21.5 22.5M25.5 1.5Q34.5 14 25.5 26.5" /></Svg>
          </Slot>
          <Slot $ml={15} $mt={-6}>
            <Svg w={33} h={28} sw={2.2}>
              <path d="M12 7H24.5Q28 7 28 10.5V22Q28 25.5 24.5 25.5H5Q1.5 25.5 1.5 22V16" />
              <path d="M31.5 13.5V19" strokeWidth="3" />
              <path d="M5 22V17H9V12H15V22Z" fill="currentColor" stroke="none" />
              <path d="M6 0L1 11H5L2.5 19L11 8H6.5L8 0Z" fill="currentColor" stroke="#202020" strokeWidth="1" />
            </Svg>
          </Slot>
          <TrayText $ml={25} $w={131} $align="flex-end">
            <Text $size={23.5} $lh={32} $ls={0.1}>6:16 PM</Text>
            <Text $size={23.5} $lh={32} $ls={0.1}>2024-12-14</Text>
          </TrayText>
          <Slot $ml={18}>
            <Svg w={26} h={30} stroke="none"><path d="M13 0C6.5 0 3 4.5 3 10V17L0.3 22.5Q-0.2 24 1.3 24H24.7Q26.2 24 25.7 22.5L23 17V10C23 4.5 19.5 0 13 0ZM8 26H18Q17 30 13 30T8 26Z" fill="#99ebff" /></Svg>
          </Slot>
        </Tray>
      </Taskbar>
    </Screen>
  );
}
